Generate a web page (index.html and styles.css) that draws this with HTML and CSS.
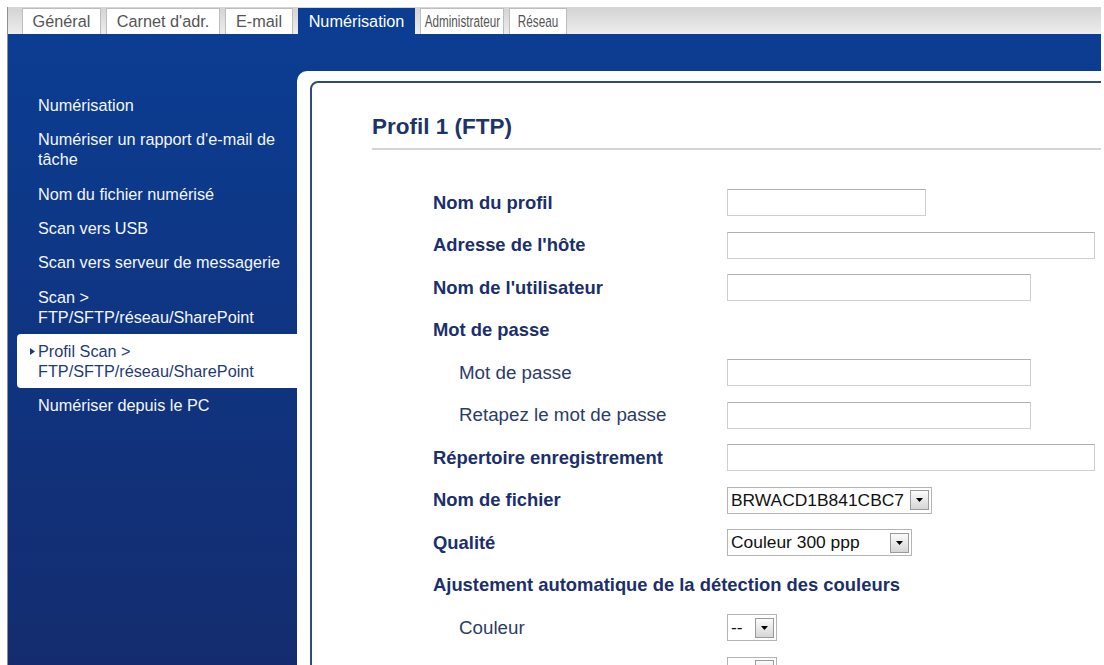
FILE: index.html
```html
<!DOCTYPE html>
<html lang="fr">
<head>
<meta charset="utf-8">
<title>Profil 1 (FTP)</title>
<link rel="stylesheet" href="styles.css">
</head>
<body>
<div class="page">
  <div class="tabbar">
    <div class="tab t-gen"><span class="txt">Général</span></div>
    <div class="tab t-car"><span class="txt">Carnet d'adr.</span></div>
    <div class="tab t-mail"><span class="txt">E-mail</span></div>
    <div class="tab t-num active"><span class="txt">Numérisation</span></div>
    <div class="tab t-adm"><span class="txt narrow">Administrateur</span></div>
    <div class="tab t-res"><span class="txt narrow">Réseau</span></div>
  </div>
  <div class="main">
    <nav class="sidebar">
      <div class="item">Numérisation</div>
      <div class="item">Numériser un rapport d'e-mail de<br>tâche</div>
      <div class="item">Nom du fichier numérisé</div>
      <div class="item">Scan vers USB</div>
      <div class="item">Scan vers serveur de messagerie</div>
      <div class="item">Scan &gt;<br>FTP/SFTP/réseau/SharePoint</div>
      <div class="item active">
        <svg class="marker" width="5" height="7" viewBox="0 0 5 7"><path d="M0 0 L5 3.5 L0 7 Z" fill="#1f3a78"/></svg>
        <span>Profil Scan &gt;<br>FTP/SFTP/réseau/SharePoint</span>
      </div>
      <div class="item">Numériser depuis le PC</div>
    </nav>
    <section class="panel">
      <div class="frame">
        <h1 class="title">Profil 1 (FTP)</h1>
        <div class="form">
          <div class="lbl">Nom du profil</div>
          <input class="field w-s" type="text">
          <div class="lbl">Adresse de l'hôte</div>
          <input class="field w-l" type="text">
          <div class="lbl">Nom de l'utilisateur</div>
          <input class="field w-m" type="text">
          <div class="lbl section">Mot de passe</div>
          <div class="lbl sub">Mot de passe</div>
          <input class="field w-m" type="password">
          <div class="lbl sub">Retapez le mot de passe</div>
          <input class="field w-m" type="password">
          <div class="lbl">Répertoire enregistrement</div>
          <input class="field w-l" type="text">
          <div class="lbl">Nom de fichier</div>
          <div class="select sel-name">
            <span class="val">BRWACD1B841CBC7</span>
            <span class="btn"><svg width="7" height="4" viewBox="0 0 7 4"><path d="M0 0 H7 L3.5 4 Z" fill="#000"/></svg></span>
          </div>
          <div class="lbl">Qualité</div>
          <div class="select sel-quality">
            <span class="val">Couleur 300 ppp</span>
            <span class="btn"><svg width="7" height="4" viewBox="0 0 7 4"><path d="M0 0 H7 L3.5 4 Z" fill="#000"/></svg></span>
          </div>
          <div class="lbl section">Ajustement automatique de la détection des couleurs</div>
          <div class="lbl sub">Couleur</div>
          <div class="select sel-small">
            <span class="val">--</span>
            <span class="btn"><svg width="7" height="4" viewBox="0 0 7 4"><path d="M0 0 H7 L3.5 4 Z" fill="#000"/></svg></span>
          </div>
          <div class="lbl sub"></div>
          <div class="select sel-small">
            <span class="val"></span>
            <span class="btn"><svg width="7" height="4" viewBox="0 0 7 4"><path d="M0 0 H7 L3.5 4 Z" fill="#000"/></svg></span>
          </div>
        </div>
      </div>
    </section>
  </div>
</div>
</body>
</html>
```

FILE: styles.css
```css
html, body {
  margin: 0;
  padding: 0;
  background: #ffffff;
}

.page {
  margin: 7px 0 0 7px;
  width: 1094px;
  height: 658px;
  overflow: hidden;
  border-left: 1px solid #8e8e8e;
  box-sizing: border-box;
  display: flex;
  flex-direction: column;
  font-family: "Liberation Sans", Arial, sans-serif;
}

.tabbar {
  flex: none;
  height: 27px;
  display: flex;
  align-items: flex-end;
  gap: 5px;
  padding-left: 14px;
  background: linear-gradient(#d3d3d3, #ededed);
}

.tab {
  height: 26px;
  box-sizing: border-box;
  display: flex;
  justify-content: center;
  border: 1px solid #bdbdbd;
  border-bottom: none;
  background: #ffffff;
  color: #555555;
  font-size: 16.25px;
  line-height: 25px;
  white-space: nowrap;
}

.t-gen { width: 79px; }
.t-car { width: 114px; }
.t-mail { width: 68px; }
.t-num { width: 117px; }
.t-adm { width: 84px; }
.t-res { width: 58px; }

.txt {
  display: inline-block;
}

.txt.narrow {
  transform: scaleX(0.72);
}

.tab.active {
  background: #0b3d92;
  border-color: #0b3d92;
  color: #ffffff;
}

.main {
  flex: 1;
  min-height: 0;
  display: flex;
  background: linear-gradient(#0b3d92, #142c6f);
}

.sidebar {
  flex: none;
  width: 289px;
  box-sizing: border-box;
  padding: 54px 0 0 9px;
}

.item {
  padding: 7.15px 9px 7.15px 21px;
  color: #f3f6fb;
  font-size: 16.25px;
  line-height: 20px;
  white-space: nowrap;
}

.item.active {
  display: flex;
  align-items: flex-start;
  padding-left: 13px;
  background: #ffffff;
  color: #1f3a78;
  border-radius: 4px 0 0 4px;
}

.marker {
  flex: none;
  margin: 7px 3px 0 0;
}

.panel {
  flex: 1;
  min-width: 0;
  margin-top: 37px;
  padding: 10px 0 0 13px;
  background: #ffffff;
  border-top-left-radius: 10px;
  overflow: hidden;
}

.frame {
  width: 900px;
  height: 700px;
  border: 2px solid #2d4a7a;
  border-radius: 8px;
  padding-top: 30px;
}

.title {
  margin: 0 0 0 60px;
  padding-bottom: 7px;
  border-bottom: 2px solid #d5d5d5;
  font-size: 22.5px;
  line-height: 28px;
  font-weight: bold;
  color: #1b3567;
}

.form {
  margin: 31.25px 0 0 121px;
  display: grid;
  grid-template-columns: 294px auto;
  grid-auto-rows: 42.5px;
  align-items: center;
  justify-items: start;
}

.lbl {
  font-size: 18.4px;
  font-weight: bold;
  color: #1b2f6c;
  white-space: nowrap;
}

.section {
  grid-column: 1 / -1;
}

.sub {
  padding-left: 26px;
  font-size: 18.75px;
  font-weight: normal;
  color: #2b3c68;
}

.field {
  display: block;
  box-sizing: border-box;
  height: 27px;
  margin: 0;
  padding: 0;
  border: 1px solid #cfcfcf;
  border-top-color: #b0b0b0;
  background: #ffffff;
}

.w-s { width: 199px; }
.w-m { width: 304px; }
.w-l { width: 368px; }

.select {
  box-sizing: border-box;
  height: 27px;
  display: flex;
  align-items: center;
  padding: 0 2px 0 3px;
  border: 1px solid #b4b4b4;
  background: #ffffff;
  font-size: 17.4px;
  color: #111111;
}

.select .val {
  flex: 1;
  white-space: nowrap;
}

.select .btn {
  flex: none;
  width: 19px;
  height: 20px;
  box-sizing: border-box;
  border: 1px solid #9a9a9a;
  background: linear-gradient(#fbfbfb, #d6d6d6);
  display: flex;
  align-items: center;
  justify-content: center;
}

.sel-name { width: 205px; }
.sel-quality { width: 185px; }
.sel-small { width: 50px; }
```
